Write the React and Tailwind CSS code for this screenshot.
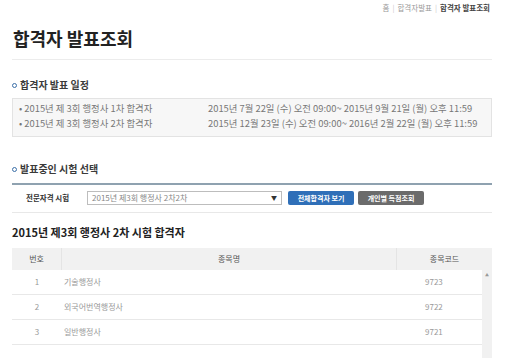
const rows = [
  { no: 1, name: "기술행정사", code: "9723" },
  { no: 2, name: "외국어번역행정사", code: "9722" },
  { no: 3, name: "일반행정사", code: "9721" },
];

const schedule = [
  {
    title: "2015년 제 3회 행정사 1차 합격자",
    period: "2015년 7월 22일 (수) 오전 09:00~ 2015년 9월 21일 (월) 오후 11:59",
  },
  {
    title: "2015년 제 3회 행정사 2차 합격자",
    period: "2015년 12월 23일 (수) 오전 09:00~ 2016년 2월 22일 (월) 오후 11:59",
  },
];

const SectionTitle = ({ children }) => (
  <div className="flex items-center gap-[3px] text-[10px] leading-[12px] font-bold text-[#3a3a3a]">
    <span className="w-[5px] h-[5px] rounded-full border-[1.5px] border-[#3b6fa8]" />
    {children}
  </div>
);

export default function App() {
  return (
    <div className="w-[510px] h-[358px] overflow-hidden bg-white font-['Noto_Sans_CJK_KR','Liberation_Sans',sans-serif] pl-[12px] pr-[18px]">
      {/* Breadcrumb */}
      <div className="h-[16px] flex items-center justify-end pr-[2px] text-[7.5px] leading-[10px] text-[#999]">
        <span>홈</span>
        <span className="mx-[3px] text-[#ccc]">|</span>
        <span>합격자발표</span>
        <span className="mx-[3px] text-[#ccc]">|</span>
        <span className="font-bold text-[#444]">합격자 발표조회</span>
      </div>

      {/* Title */}
      <div className="h-[44px] flex items-center pl-[1px] border-b border-[#ececec]">
        <h1 className="text-[18px] leading-[22px] font-bold text-[#222]">합격자 발표조회</h1>
      </div>

      {/* Schedule */}
      <div className="h-[38px] flex items-center pt-[12px]">
        <SectionTitle>합격자 발표 일정</SectionTitle>
      </div>
      <div className="h-[39px] border border-[#e3e3e3] bg-[#f7f7f7] pt-[2px] pl-[6px] text-[9.4px] leading-[15px] text-[#777]">
        {schedule.map((s) => (
          <div key={s.title} className="flex">
            <span className="w-[189px]">• {s.title}</span>
            <span>{s.period}</span>
          </div>
        ))}
      </div>

      {/* Exam select */}
      <div className="h-[46px] flex items-center pt-[18px]">
        <SectionTitle>발표중인 시험 선택</SectionTitle>
      </div>
      <div className="h-[2px] bg-[#8fa2b0]" />
      <div className="h-[28px] flex items-center pb-[2px] pl-[14px] border-b border-[#e8e8e8]">
        <span className="w-[61px] text-[7.5px] leading-[10px] font-bold text-[#333]">전문자격 시험</span>
        <div className="w-[195px] h-[14px] border border-[#bdbdbd] flex items-center justify-between pl-[4px] pr-[4px] text-[8px] leading-[10px] text-[#888]">
          <span>2015년 제3회 행정사 2차2차</span>
          <span className="text-[6px] text-[#333]">▼</span>
        </div>
        <button className="ml-[6px] w-[66px] h-[14px] rounded-[2px] bg-[#2f6fb8] text-white text-[7px] leading-[10px] font-bold">
          전체합격자 보기
        </button>
        <button className="ml-[4px] w-[66px] h-[14px] rounded-[2px] bg-[#6b6b6b] text-white text-[7px] leading-[10px] font-bold">
          개인별 득점조회
        </button>
      </div>

      {/* Result table */}
      <div className="h-[35px] flex items-center pt-[3px]">
        <h2 className="text-[11px] leading-[14px] font-bold text-[#222]">2015년 제3회 행정사 2차 시험 합격자</h2>
      </div>
      <div className="h-[22px] flex bg-[#f1f1f1] text-[8px] leading-[10px] text-[#555]">
        <div className="w-[50px] flex items-center justify-center border-r border-[#e4e4e4]">번호</div>
        <div className="w-[335px] flex items-center justify-center border-r border-[#e4e4e4]">종목명</div>
        <div className="flex-1 flex items-center justify-center">종목코드</div>
      </div>
      <div className="flex">
        <div className="flex-1">
          {[...rows, { no: "", name: "", code: "" }].map((r, i) => (
            <div key={i} className="h-[25px] flex items-center border-b border-[#e8e8e8] text-[8px] leading-[10px] text-[#999]">
              <div className="w-[50px] text-center">{r.no}</div>
              <div className="w-[335px] pl-[2px]">{r.name}</div>
              <div className="flex-1 pl-[28px]">{r.code}</div>
            </div>
          ))}
        </div>
        <div className="w-[10px] bg-[#f1f1f1] flex justify-center pt-[2px]">
          <span className="text-[4px] leading-[6px] text-[#999]">▲</span>
        </div>
      </div>
    </div>
  );
}
